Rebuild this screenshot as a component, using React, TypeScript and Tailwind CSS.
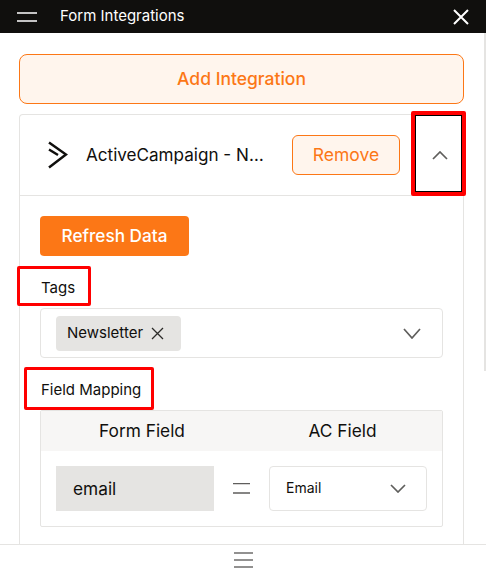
const font = { fontFamily: 'Inter, sans-serif' }

function RedBox({ className }: { className: string }) {
  return <div className={`absolute rounded-[2px] border-[3px] border-[#f00] pointer-events-none ${className}`} />
}

function Select({ children, className }: { children: React.ReactNode; className: string }) {
  return (
    <div className={`flex items-center justify-between rounded-[4px] border border-[#e5e4e2] bg-white ${className}`}>
      {children}
    </div>
  )
}

function Chevron({ w, h, up = false, className = '' }: { w: number; h: number; up?: boolean; className?: string }) {
  const d = up ? `M1 ${h - 1} ${w / 2} 1 ${w - 1} ${h - 1}` : `M1 1 ${w / 2} ${h - 1} ${w - 1} 1`
  return (
    <svg width={w} height={h} viewBox={`0 0 ${w} ${h}`} fill="none" stroke="#5f5e5c" strokeWidth="1.7" className={`shrink-0 ${className}`}>
      <path d={d} />
    </svg>
  )
}

function Cross({ size, width, className = '' }: { size: number; width: number; className?: string }) {
  return (
    <svg width={size} height={size} viewBox={`0 0 ${size} ${size}`} fill="none" stroke="currentColor" strokeWidth={width} className={`shrink-0 ${className}`}>
      <path d={`M1 1 ${size - 1} ${size - 1}M${size - 1} 1 1 ${size - 1}`} />
    </svg>
  )
}

export default function App() {
  return (
    <div style={font} className="relative flex h-[574px] w-[486px] flex-col overflow-hidden bg-white text-[#100f0d]">
      <header className="flex h-[33px] shrink-0 items-center justify-between bg-[#100f0d] pl-[17px] pr-[17px] text-white">
        <div className="flex items-center gap-[23px]">
          <svg width="20" height="10" viewBox="0 0 20 10" fill="none" stroke="currentColor" strokeWidth="1.5">
            <path d="M0 1h20M0 9h20" />
          </svg>
          <span className="relative -top-px text-[15px] leading-none">Form Integrations</span>
        </div>
        <Cross size={16} width={2} />
      </header>

      <main className="flex min-h-0 flex-1 flex-col pl-[19px] pr-[22px] pt-[21px]">
        <button className="h-[50px] shrink-0 rounded-[8px] border border-[#fc7716] bg-[#fff5ed] text-[17.5px] font-medium text-[#fc7716]">
          Add Integration
        </button>

        <section className="mt-[10px] flex-1 rounded-t-[4px] border border-b-0 border-[#e5e4e2]">
          <div className="flex h-[81px] items-center border-b border-[#e5e4e2] pl-[27px]">
            <svg width="21" height="28" viewBox="0 0 21 28" fill="none" stroke="#100f0d" strokeWidth="2.5" className="shrink-0">
              <path d="M2 1.5 19 13.5 2 26.5" />
              <path d="M2 8.5 11 14" />
            </svg>
            <span className="ml-[18px] w-[206px] shrink-0 text-[17.1px] whitespace-nowrap">ActiveCampaign - N…</span>
            <button className="h-[40px] w-[108px] shrink-0 rounded-[6px] border border-[#fc7716] bg-[#fff5ed] text-[17.5px] text-[#fc7716]">
              Remove
            </button>
            <Chevron w={16} h={9} up className="ml-[32px]" />
          </div>

          <div className="px-[20px] pt-[20px]">
            <button className="h-[40px] w-[149px] rounded-[4px] bg-[#fc7716] text-[17.2px] font-medium text-white">
              Refresh Data
            </button>

            <div className="mt-[23px] pl-[1px] text-[15px] leading-[18px]">Tags</div>
            <Select className="mt-[11px] h-[50px] pl-[15px] pr-[21px]">
              <span className="flex h-[35px] w-[125px] items-center rounded-[4px] bg-[#e5e4e2] pl-[11px] text-[15px]">
                Newsletter
                <Cross size={13} width={1.3} className="ml-[8px] text-[#2c2b29]" />
              </span>
              <Chevron w={18} h={11} />
            </Select>

            <div className="mt-[23px] pl-[1px] text-[15px] leading-[18px]">Field Mapping</div>
            <div className="mt-[11px] h-[117px] rounded-[2px] border border-[#e5e4e2]">
              <div className="grid h-[40px] grid-cols-[202px_1fr] items-center bg-[#f7f6f5] text-[17.3px]">
                <span className="text-center">Form Field</span>
                <span className="text-center">AC Field</span>
              </div>
              <div className="flex items-center px-[15px] pt-[15px]">
                <div className="flex h-[45px] w-[158px] items-center bg-[#e5e4e2] pl-[17px] text-[17.3px]">email</div>
                <svg width="17" height="12" viewBox="0 0 17 12" fill="none" stroke="#5f5e5c" strokeWidth="1.6" className="mx-[19px] shrink-0">
                  <path d="M0 0.5h17M0 10h17" />
                </svg>
                <Select className="h-[45px] w-[158px] pl-[16px] pr-[20px]">
                  <span className="relative -top-px text-[14px]">Email</span>
                  <Chevron w={16} h={9} />
                </Select>
              </div>
            </div>
          </div>
        </section>
      </main>

      <footer className="flex h-[30px] shrink-0 items-center justify-center border-t border-[#e5e4e2] bg-white">
        <svg width="19" height="16" viewBox="0 0 19 16" fill="none" stroke="#6f6e6c" strokeWidth="1.5">
          <path d="M0 1h19M0 8h19M0 15h19" />
        </svg>
      </footer>

      <div className="absolute right-0 top-[33px] h-[338px] w-[2px] bg-[#e5e4e2]" />

      <div className="absolute left-[411px] top-[111px] h-[85px] w-[55px] rounded-[2px] border-[4px] border-[#f00]">
        <div className="h-full w-full border border-black" />
      </div>
      <RedBox className="left-[17px] top-[266px] h-[40px] w-[74px]" />
      <RedBox className="left-[24px] top-[367px] h-[43px] w-[130px]" />
    </div>
  )
}
